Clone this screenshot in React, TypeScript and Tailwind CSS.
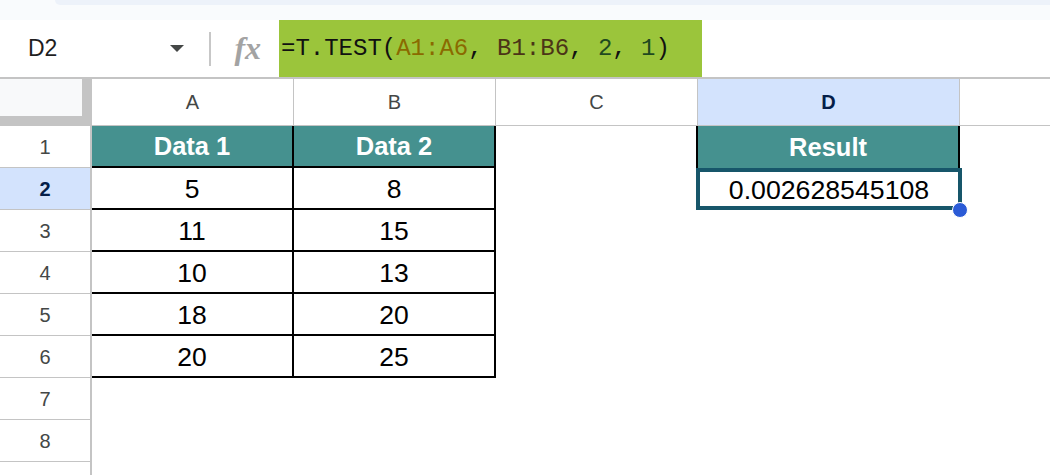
import React from 'react';

const cols = [
  { id: 'A', w: 'w-[202px]' },
  { id: 'B', w: 'w-[202px]' },
  { id: 'C', w: 'w-[202px]' },
  { id: 'D', w: 'w-[262px]' },
];

const data = [
  ['5', '8'],
  ['11', '15'],
  ['10', '13'],
  ['18', '20'],
  ['20', '25'],
];

const sans = "font-['Liberation_Sans',Arial,sans-serif]";

function RowHead({ n, active }: { n: number; active?: boolean }) {
  return (
    <div
      className={
        'w-[92px] h-[42px] shrink-0 flex items-center justify-center border-r-2 border-b border-[#c4c4c4] text-[20px] ' +
        (active ? 'bg-[#d3e3fd] text-[#041e49] font-bold' : 'bg-white text-[#444746]')
      }
    >
      {n}
    </div>
  );
}

export default function App() {
  return (
    <div className={`w-[1050px] h-[475px] overflow-hidden bg-white ${sans}`}>
      {/* top strip */}
      <div className="h-[20px] bg-[#f9fbfd]">
        <div className="ml-[55px] h-[5px] bg-[#edf2fa] rounded-bl-[14px]" />
      </div>

      {/* formula bar */}
      <div className="h-[59px] flex items-stretch border-b-2 border-[#c4c4c4] bg-white">
        <div className="w-[279px] flex items-center">
          <span className="ml-[28px] text-[23px] text-[#1f1f1f]">D2</span>
          <div className="ml-[113px] w-0 h-0 border-l-[7px] border-r-[7px] border-t-[7px] border-l-transparent border-r-transparent border-t-[#444746]" />
          <div className="ml-[25px] w-[2px] h-[34px] bg-[#c7c7c7]" />
          <span className="ml-[23px] font-['Liberation_Serif',serif] italic font-bold text-[32px] leading-none text-[#a3a3a3] -mt-[2px]">
            fx
          </span>
        </div>
        <div className="w-[423px] h-[57px] bg-[#9bc53b] flex items-center pl-[2px] font-['Liberation_Mono',monospace] text-[24px] text-[#111] whitespace-pre">
          <span>=T.TEST(</span>
          <span className="text-[#8a6a00]">A1:A6</span>
          <span>, </span>
          <span className="text-[#4b3417]">B1:B6</span>
          <span>, </span>
          <span className="text-[#1f4a1f]">2</span>
          <span>, </span>
          <span className="text-[#1f4a1f]">1</span>
          <span>)</span>
        </div>
      </div>

      {/* column headers */}
      <div className="flex h-[47px]">
        <div className="w-[92px] shrink-0 bg-[#f8f9fa] border-r-[10px] border-b-[10px] border-[#c4c4c4]" />
        {cols.map(c => (
          <div
            key={c.id}
            className={
              c.w +
              ' shrink-0 flex items-center justify-center border-r border-b border-[#c4c4c4] text-[20px] ' +
              (c.id === 'D' ? 'bg-[#d3e3fd] text-[#041e49] font-bold' : 'text-[#444746]')
            }
          >
            {c.id}
          </div>
        ))}
        <div className="flex-1 border-b border-[#c4c4c4]" />
      </div>

      {/* row 1 */}
      <div className="flex">
        <RowHead n={1} />
        <div className="w-[202px] h-[42px] shrink-0 bg-[#45918f] border-r-2 border-b-2 border-black flex items-center justify-center text-white font-bold text-[25.5px]">
          Data 1
        </div>
        <div className="w-[202px] h-[42px] shrink-0 bg-[#45918f] border-r-2 border-b-2 border-black flex items-center justify-center text-white font-bold text-[25.5px]">
          Data 2
        </div>
        <div className="w-[202px] h-[42px] shrink-0 border-r-2 border-black" />
        <div className="w-[262px] h-[42px] shrink-0 bg-[#45918f] border-r-2 border-black flex items-center justify-center text-white font-bold text-[25.5px]">
          Result
        </div>
      </div>

      {/* rows 2-6 */}
      {data.map((r, i) => (
        <div key={i} className="flex">
          <RowHead n={i + 2} active={i === 0} />
          <div className="w-[202px] h-[42px] shrink-0 pt-[3px] border-r-2 border-b-2 border-black flex items-center justify-center text-[26.5px] text-black">
            {r[0]}
          </div>
          <div className="w-[202px] h-[42px] shrink-0 pt-[3px] border-r-2 border-b-2 border-black flex items-center justify-center text-[26.5px] text-black">
            {r[1]}
          </div>
          <div className="w-[202px] h-[42px] shrink-0" />
          {i === 0 && (
            <div className="relative w-[262px] h-[42px] shrink-0 pt-[3px] flex items-center justify-center text-[26.7px] text-black">
              0.002628545108
              <div className="absolute -left-[2px] top-0 -right-[2px] bottom-0 border-[4px] border-[#17566a]" />
              <div className="absolute -right-[8px] -bottom-[8px] w-[16px] h-[16px] rounded-full bg-[#2b5bd6] border border-white" />
            </div>
          )}
        </div>
      ))}

      {/* rows 7-9 */}
      {[7, 8, 9].map(n => (
        <div key={n} className="flex">
          <RowHead n={n} />
        </div>
      ))}
    </div>
  );
}
